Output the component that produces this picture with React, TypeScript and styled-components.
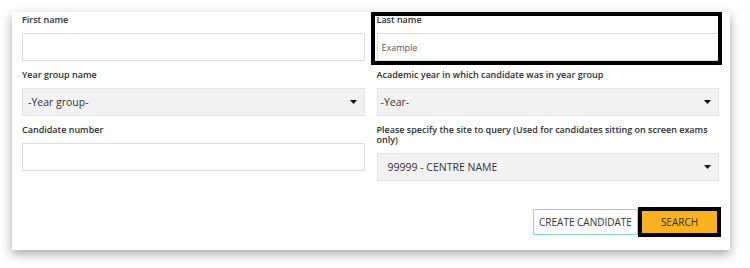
import React from "react";
import styled, { createGlobalStyle } from "styled-components";

const GlobalStyle = createGlobalStyle`
  html,
  body {
    margin: 0;
    padding: 0;
    background: #ffffff;
    font-family: "Open Sans", "Liberation Sans", sans-serif;
    color: #333333;
  }
`;

const Page = styled.div`
  width: 750px;
  height: 268px;
  padding: 12px 20px 0 12px;
  box-sizing: border-box;
`;

const Card = styled.form`
  width: 718px;
  box-sizing: border-box;
  padding: 1px 11px 13px 10px;
  background: #ffffff;
  box-shadow: 0 4px 10px rgba(0, 0, 0, 0.35);
`;

const Grid = styled.div`
  display: grid;
  grid-template-columns: 1fr 1fr;
  column-gap: 12px;
  row-gap: 7px;
  align-items: start;
`;

const Field = styled.div<{ $highlight?: boolean }>`
  position: relative;
  display: flex;
  flex-direction: column;

  ${({ $highlight }) =>
    $highlight &&
    `
    &::after {
      content: "";
      position: absolute;
      top: -1px;
      left: -6px;
      right: -3px;
      bottom: -4px;
      border: 4px solid #000000;
      pointer-events: none;
    }
  `}
`;

const Label = styled.label`
  font-size: 9px;
  font-weight: 600;
  line-height: 10px;
  padding: 2px 0;
  margin-bottom: 6px;
  color: #2e2e2e;
`;

const TextInput = styled.input`
  height: 28px;
  box-sizing: border-box;
  padding: 0 4px;
  border: 1px solid #dcdcdc;
  background: #ffffff;
  font-family: inherit;
  font-size: 9px;
  color: #555555;
  outline: none;
`;

const Select = styled.div<{ $inset: number }>`
  display: flex;
  align-items: center;
  justify-content: space-between;
  height: 28px;
  box-sizing: border-box;
  padding: 0 7px 0 ${({ $inset }) => $inset}px;
  border: 1px solid #e2e2e2;
  background: #f2f2f2;
  font-size: 10.5px;
  color: #333333;
`;

const Caret = () => (
  <svg width="7" height="4" viewBox="0 0 7 4">
    <path d="M0 0 H7 L3.5 4 Z" fill="#111111" />
  </svg>
);

const Actions = styled.div`
  display: flex;
  justify-content: flex-end;
  align-items: center;
  margin-top: 26px;
  margin-right: -2px;
`;

const Button = styled.button<{ $primary?: boolean }>`
  box-sizing: border-box;
  padding: 0;
  font-family: inherit;
  font-size: 10px;
  text-transform: uppercase;
  color: #333333;
  cursor: pointer;
  ${({ $primary }) =>
    $primary
      ? `
    width: 83px;
    height: 30px;
    border: 4px solid #000000;
    background: #fbb21c;
  `
      : `
    width: 105px;
    height: 26px;
    border: 1px solid #8ad6d1;
    background: #ffffff;
  `}
`;

export default function App() {
  return (
    <Page>
      <GlobalStyle />
      <Card>
        <Grid>
          <Field>
            <Label>First name</Label>
            <TextInput />
          </Field>
          <Field $highlight>
            <Label>Last name</Label>
            <TextInput defaultValue="Example" />
          </Field>
          <Field>
            <Label>Year group name</Label>
            <Select $inset={5}>
              <span>-Year group-</span>
              <Caret />
            </Select>
          </Field>
          <Field>
            <Label>Academic year in which candidate was in year group</Label>
            <Select $inset={3}>
              <span>-Year-</span>
              <Caret />
            </Select>
          </Field>
          <Field>
            <Label>Candidate number</Label>
            <TextInput />
          </Field>
          <Field>
            <Label>
              Please specify the site to query (Used for candidates sitting on
              screen exams only)
            </Label>
            <Select $inset={10}>
              <span>99999 - CENTRE NAME</span>
              <Caret />
            </Select>
          </Field>
        </Grid>
        <Actions>
          <Button type="button">Create candidate</Button>
          <Button type="button" $primary>
            Search
          </Button>
        </Actions>
      </Card>
    </Page>
  );
}
